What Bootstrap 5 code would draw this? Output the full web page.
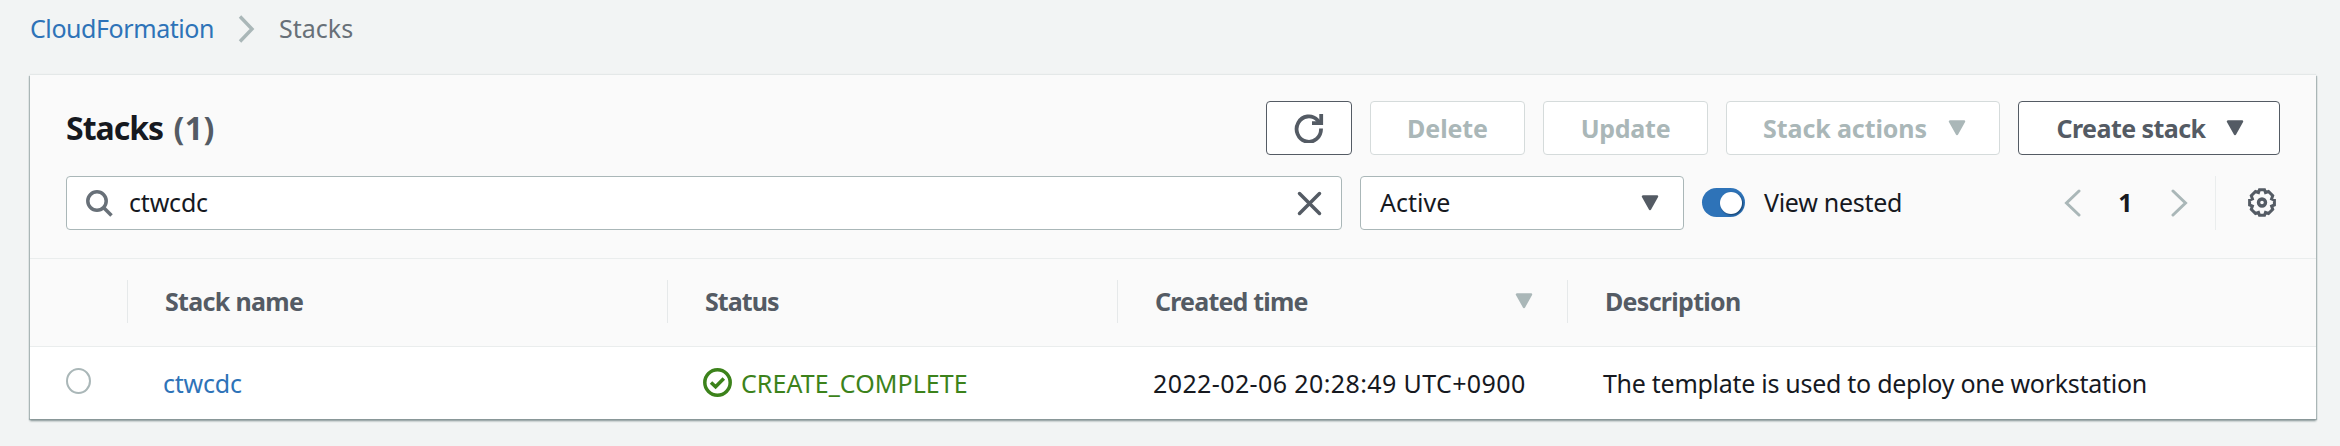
<!DOCTYPE html>
<html lang="en">
<head>
<meta charset="utf-8">
<meta name="viewport" content="width=device-width, initial-scale=1">
<title>CloudFormation - Stacks</title>
<link rel="stylesheet" href="https://cdn.jsdelivr.net/npm/bootstrap@5.3.0/dist/css/bootstrap.min.css">
<style>
body{background:#f2f4f4;color:#16191f;font-family:"Noto Sans","Open Sans",sans-serif;font-size:25px;line-height:34px;min-height:100vh}
svg{display:block;flex:none}
.crumbs{--bs-breadcrumb-divider:none;height:75px;padding:11px 0 0 30px}
a,.crumbs a{color:#2e73b8;text-decoration:none}
.panel{margin:0 24px 0 30px;height:344px;background:#fff;box-shadow:0 -1px 1px #e4e8e8,0 2px 2px #879596,1px 1px 1px #aab7b8,-1px 1px 1px #aab7b8}
.tools{height:184px;padding:26px 36px 0;background:#fafafa;border-bottom:1px solid #eaeded}
.panel h1{font-size:32px;line-height:54px;font-weight:700;letter-spacing:-1px}
.panel h1 span{color:#545b64;letter-spacing:.4px;margin-left:3px}
.btn-aws{--bs-btn-font-size:25px;--bs-btn-line-height:34px;--bs-btn-font-weight:700;--bs-btn-padding-x:0;--bs-btn-padding-y:0;--bs-btn-border-radius:4px;--bs-btn-color:#545b64;--bs-btn-bg:#fff;--bs-btn-border-color:#545b64;--bs-btn-disabled-color:#aab7b8;--bs-btn-disabled-bg:#fff;--bs-btn-disabled-border-color:#d5dbdb;--bs-btn-disabled-opacity:1;height:54px;padding-bottom:1px}
.b-refresh{width:86px}.b-delete{width:155px;letter-spacing:-.1px}.b-update{width:165px;letter-spacing:-.27px}
.b-actions{width:274px;letter-spacing:-.1px;padding-left:3px}.b-create{width:262px;letter-spacing:-.56px;padding-left:3px}
.field{height:54px;background:#fff;border:1px solid #aab7b8;border-radius:4px}
.f-search{width:1276px;padding:0 19px}
.f-state{width:324px;padding:0 24px 0 19px}
.f-search input{font-size:25px;line-height:34px;letter-spacing:-.2px;color:#16191f;box-shadow:none!important}
.toggle{width:43px;height:29px;border-radius:15px;background:#2e73b8;padding:4px 3px 0 0;margin-top:-1px}
.toggle i{width:22px;height:22px;border-radius:50%;background:#fff;box-shadow:1px 1px 2px #123c68}
.sep{width:1px;height:54px;background:#eaeded}
.lift{margin-top:-2px}
.grid-row{display:grid;grid-template-columns:97px 540px 450px 450px 1fr}
.head-row{height:88px;background:#fafafa;border-bottom:1px solid #eaeded;color:#545b64;font-weight:700;padding:21px 0 22px}
.head-row>div{padding-left:37px;height:43px;line-height:43px}
.head-row>div+div{border-left:1px solid #e6e9ea}
.body-row{height:72px;padding-bottom:1px}
.body-row>div{padding-left:37px}
.radio-dot{width:25px;height:26px;border:2px solid #aab7b8;background:#fff;margin:-3px 0 0 -1px}
.ok{color:#3c821b}
</style>
</head>
<body>
<nav aria-label="breadcrumb">
  <ol class="breadcrumb crumbs mb-0 align-items-start">
    <li style="letter-spacing:-.43px"><a href="#">CloudFormation</a></li>
    <li class="ms-4 me-4 pt-1"><svg width="17" height="28" viewBox="0 0 17 28" fill="none" stroke="#aab7b8" stroke-width="3.4"><path d="M2 1.500 14 14 2 26.500"/></svg></li>
    <li style="color:#687078" aria-current="page">Stacks</li>
  </ol>
</nav>
<main class="panel">
  <section class="tools">
    <div class="d-flex align-items-center">
      <h1 class="mb-0 me-auto">Stacks <span>(1)</span></h1>
      <div class="d-flex" style="gap:18px">
        <button class="btn btn-aws b-refresh d-flex align-items-center justify-content-center" aria-label="Refresh"><svg width="30" height="30" viewBox="0 0 30 30" fill="none" stroke="currentColor" stroke-width="3.800"><path d="M27 15.500a12.200 12.700 0 1 1-3.400-8.200L26 10"/><path d="M27.200 1V10.200H18"/></svg></button>
        <button class="btn btn-aws b-delete" disabled>Delete</button>
        <button class="btn btn-aws b-update" disabled>Update</button>
        <button class="btn btn-aws b-actions d-flex align-items-center justify-content-center" disabled>Stack actions<svg style="margin-left:21px" width="18" height="16" viewBox="0 0 18 16"><path d="M2 1.500H16L9 14Z" fill="currentColor" stroke="currentColor" stroke-width="2.500" stroke-linejoin="round"/></svg></button>
        <button class="btn btn-aws b-create d-flex align-items-center justify-content-center">Create stack<svg style="margin-left:21px" width="18" height="16" viewBox="0 0 18 16"><path d="M2 1.500H16L9 14Z" fill="currentColor" stroke="currentColor" stroke-width="2.500" stroke-linejoin="round"/></svg></button>
      </div>
    </div>
    <div class="d-flex align-items-center" style="margin-top:21px">
      <div class="field f-search d-flex align-items-center">
        <svg width="27" height="27" viewBox="0 0 27 27" fill="none" stroke="#687078" stroke-width="3.500"><circle cx="11" cy="11" r="9.200"/><path d="M17.500 17.500 25.500 25.500"/></svg>
        <input class="form-control border-0 bg-transparent p-0 lift" style="margin-left:16px" type="text" value="ctwcdc" aria-label="Find stacks">
        <svg width="25" height="25" viewBox="0 0 25 25" fill="none" stroke="#545b64" stroke-width="3.500" stroke-linecap="round"><path d="M2.500 2.500 22.500 22.500M22.500 2.500 2.500 22.500"/></svg>
      </div>
      <div class="field f-state d-flex align-items-center justify-content-between" style="margin-left:18px"><span class="lift">Active</span><svg width="18" height="16" viewBox="0 0 18 16"><path d="M2 1.500H16L9 14Z" fill="#545b64" stroke="#545b64" stroke-width="2.500" stroke-linejoin="round"/></svg></div>
      <div class="toggle d-flex justify-content-end" style="margin-left:18px" role="switch" aria-checked="true"><i></i></div>
      <span class="lift" style="margin-left:19px;letter-spacing:-.29px">View nested</span>
      <div class="d-flex align-items-center ms-auto">
        <svg width="17" height="28" viewBox="0 0 17 28" fill="none" stroke="#aab7b8" stroke-width="3" stroke-linecap="round"><path d="M15 2 2.500 14 15 26"/></svg>
        <b class="text-center lift" style="width:90px;padding-right:1px">1</b>
        <svg width="17" height="28" viewBox="0 0 17 28" fill="none" stroke="#aab7b8" stroke-width="3" stroke-linecap="round"><path d="M2 2 14.500 14 2 26"/></svg>
        <div class="sep" style="margin:0 32px 0 27px"></div>
        <svg style="margin:-1px 4px 0 0" width="28" height="29" viewBox="0 0 28 29" fill="none" stroke="#545b64"><path stroke-width="3" stroke-linejoin="miter" d="M11.500 1.800H16.500L17.500 4.500 20.500 3.500 24.700 7.700 23.600 10.900 26.400 12V17L23.600 18.100 24.700 21.300 20.500 25.500 17.500 24.500 16.500 27.200H11.500L10.500 24.500 7.500 25.500 3.300 21.300 4.400 18.100 1.600 17V12L4.400 10.900 3.300 7.700 7.500 3.500 10.500 4.500Z"/><circle cx="14" cy="14.500" r="3.500" stroke-width="3.400"/></svg>
      </div>
    </div>
  </section>
  <section>
    <div class="grid-row head-row">
      <div></div>
      <div style="letter-spacing:-.68px">Stack name</div>
      <div style="letter-spacing:-.94px">Status</div>
      <div class="d-flex justify-content-between" style="letter-spacing:-.81px">Created time<svg style="margin:13px 34px 0 0" width="18" height="16" viewBox="0 0 18 16"><path d="M2 1.500H16L9 14Z" fill="#aab7b8" stroke="#aab7b8" stroke-width="2.500" stroke-linejoin="round"/></svg></div>
      <div style="letter-spacing:-.71px">Description</div>
    </div>
    <div class="grid-row body-row align-items-center">
      <div><div class="radio-dot rounded-circle" role="radio" aria-checked="false"></div></div>
      <div style="padding-left:36px;letter-spacing:-.21px"><a href="#">ctwcdc</a></div>
      <div class="ok d-flex align-items-center" style="padding-left:36px"><svg width="29" height="29" viewBox="0 0 29 29" fill="none" stroke="currentColor" stroke-width="3.500"><circle cx="14.500" cy="14.500" r="12.700"/><path d="M8 14.500 12.600 18.800 20.800 10.600"/></svg><span style="margin-left:9px;letter-spacing:.06px">CREATE_COMPLETE</span></div>
      <div style="padding-left:36px;letter-spacing:.39px">2022-02-06 20:28:49 UTC+0900</div>
      <div style="letter-spacing:-.28px;padding-left:36px">The template is used to deploy one workstation</div>
    </div>
  </section>
</main>
<script src="https://cdn.jsdelivr.net/npm/bootstrap@5.3.0/dist/js/bootstrap.bundle.min.js"></script>
</body>
</html>
